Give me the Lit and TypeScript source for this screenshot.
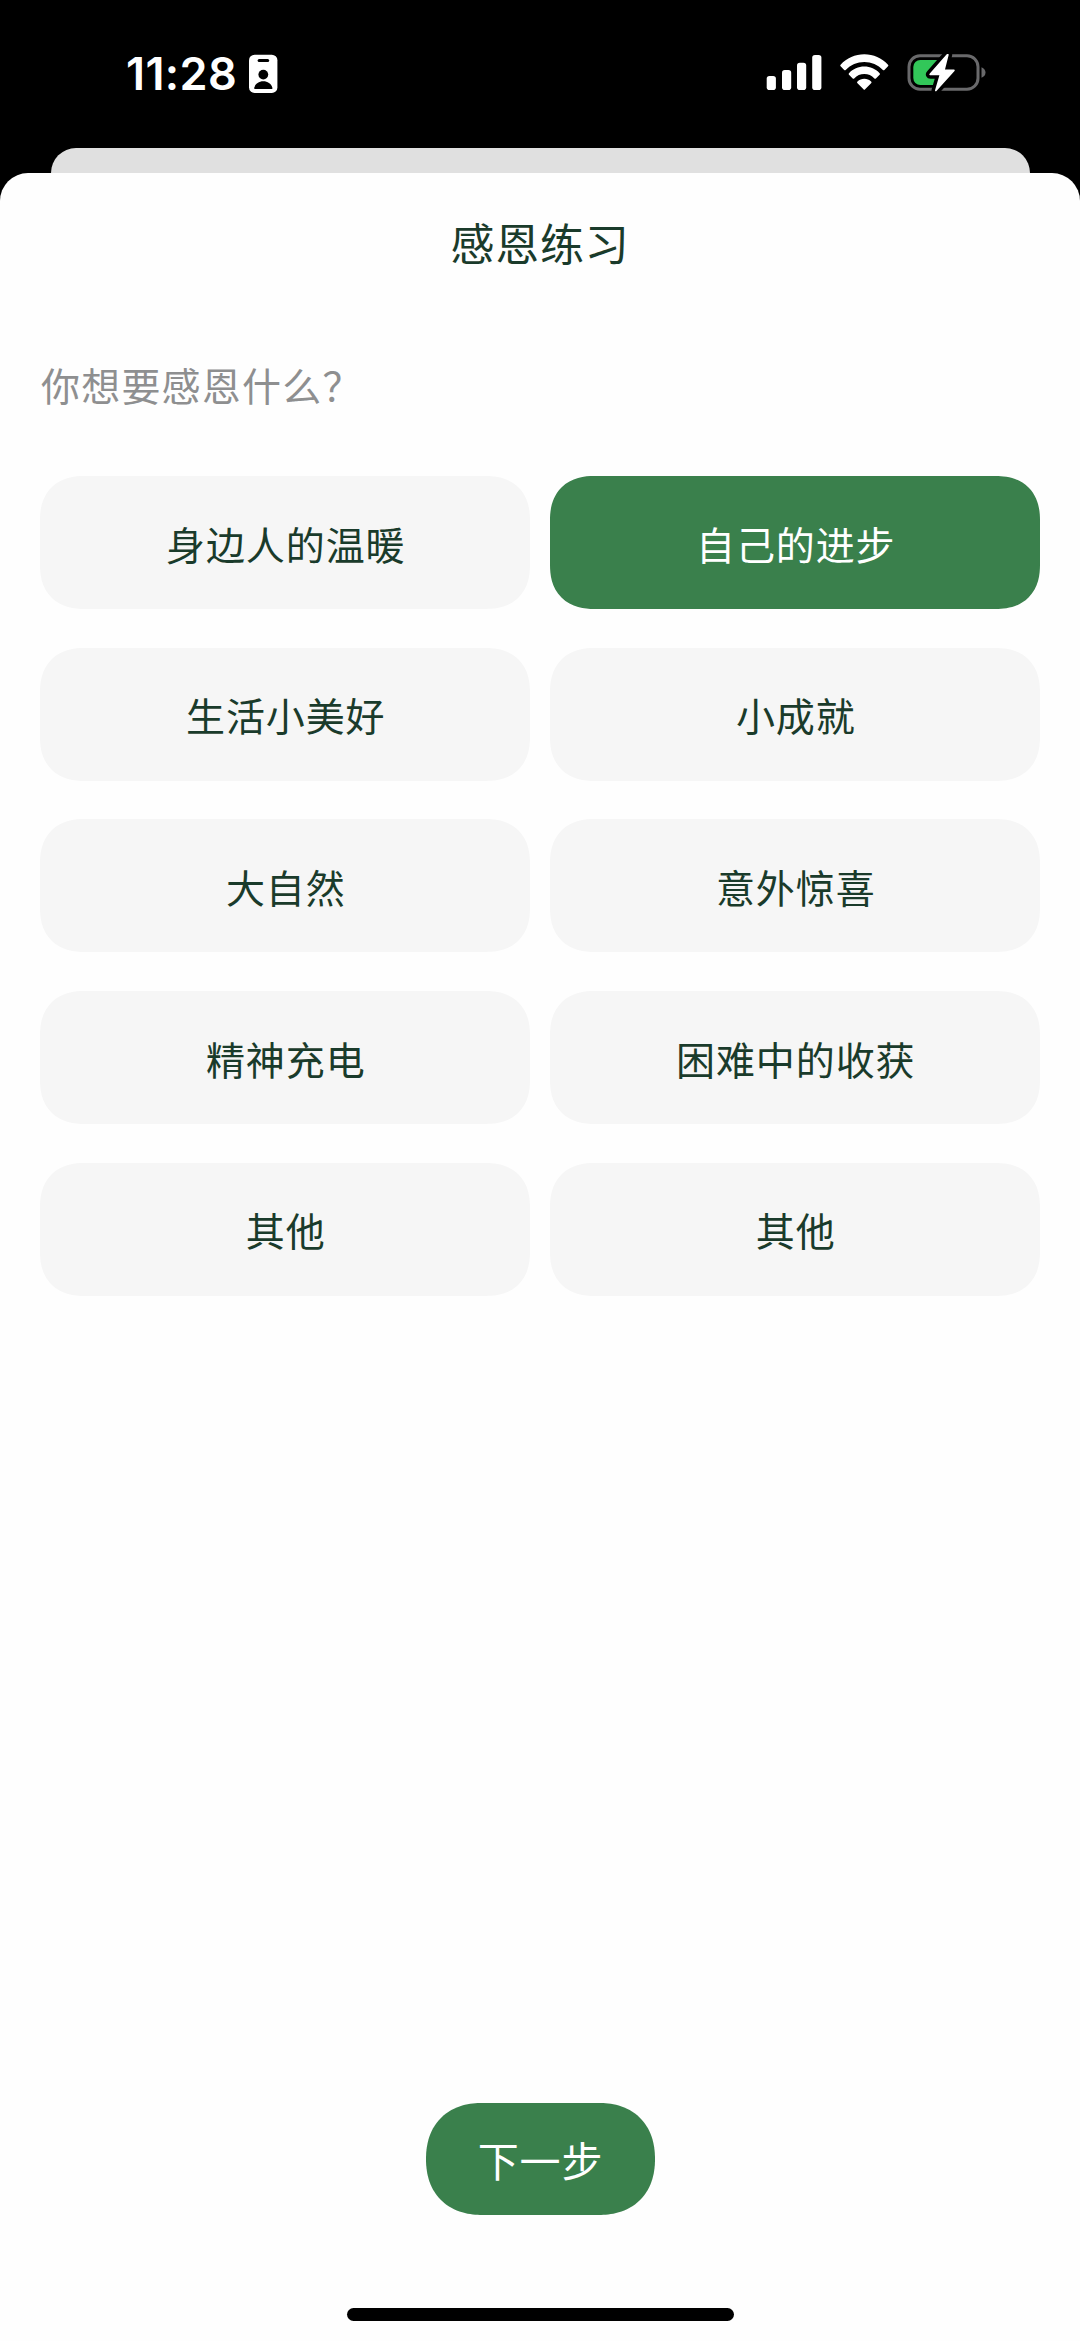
import { LitElement, html, css } from "lit";
import { customElement, property, state } from "lit/decorators.js";
import { classMap } from "lit/directives/class-map.js";

@customElement("status-bar")
class StatusBar extends LitElement {
  static styles = css`
    :host {
      display: flex;
      justify-content: space-between;
      align-items: flex-start;
      height: 148px;
      padding: 54px 94px 0 126px;
      box-sizing: border-box;
      color: #fff;
    }
    .left {
      display: flex;
      gap: 12px;
    }
    .time {
      font: 600 45px/40px Inter, sans-serif;
      letter-spacing: 0.4px;
      width: 111px;
      white-space: nowrap;
    }
    svg {
      display: block;
    }
  `;

  render() {
    return html`
      <div class="left">
        <div class="time">11:28</div>
        <svg width="29" height="40" viewBox="0 0 29 40">
          <rect x="0" y="0.7" width="28.4" height="38.3" rx="5.6" fill="#fff" />
          <rect x="8.6" y="5" width="11.6" height="3" rx="1.5" />
          <circle cx="14.3" cy="20.6" r="4.9" />
          <path d="M6 34.9c-.9 0-1-.6-.7-1.500C6.500 29.700 10 27.300 14.300 27.300s7.800 2.400 9 6.100c.3.900.2 1.500-.7 1.500z" />
        </svg>
      </div>
      <svg width="220" height="40" viewBox="0 0 220 40">
        <g fill="#fff">
          <rect x="0.7" y="22" width="9.2" height="14" rx="2.800" />
          <rect x="16" y="16" width="9.200" height="20" rx="2.800" />
          <rect x="31" y="8.800" width="9.200" height="27.200" rx="2.800" />
          <rect x="46.200" y="1" width="9.200" height="35" rx="2.800" />
          <path d="M74.600 12.200a1 1 0 0 1 0-1.500C80.800 4 89.200.3 98.300.3s17.500 3.700 23.700 10.400a1 1 0 0 1 0 1.500l-3.600 3.700a1 1 0 0 1-1.500 0C112 10.800 105.400 7.900 98.300 7.900s-13.700 2.900-18.600 8a1 1 0 0 1-1.500 0z" />
          <path d="M83 20.700a1 1 0 0 1 0-1.500c4-4.200 9.400-6.600 15.300-6.600s11.300 2.400 15.300 6.600a1 1 0 0 1 0 1.500l-3.700 3.700a1 1 0 0 1-1.500 0c-2.700-2.800-6.200-4.300-10.100-4.300s-7.400 1.500-10.100 4.300a1 1 0 0 1-1.500 0z" />
          <path d="M91.500 29.200a1 1 0 0 1 0-1.600c1.800-1.800 4.200-2.800 6.800-2.800s5 1 6.800 2.800a1 1 0 0 1 0 1.600l-6 6.100a1 1 0 0 1-1.600 0z" />
        </g>
        <rect x="143" y="1.800" width="69" height="33.400" rx="11" fill="none" stroke="#69696b" stroke-width="3" />
        <path d="M215.500 13.200c2.600 1 4 3 4 5.300s-1.400 4.300-4 5.300z" fill="#69696b" />
        <rect x="147.300" y="6" width="30" height="25" rx="7" fill="#32c759" />
        <path
          d="M181.200 .3 164.300 19.500c-.9 1-.4 1.800.7 1.800h8.900l-4.300 14.600c-.4 1.400.7 1.900 1.600.8L188.800 17.300c.9-1 .4-1.900-.7-1.900h-8.600l3.600-14.200c.3-1.400-.9-1.900-1.900-.9z"
          transform="translate(-.5 0)"
          fill="#fff"
          stroke="#000"
          stroke-width="7"
          paint-order="stroke"
        />
      </svg>
    `;
  }
}

@customElement("topic-option")
class TopicOption extends LitElement {
  @property() label = "";
  @property({ type: Boolean }) selected = false;

  static styles = css`
    :host {
      display: block;
    }
    .option {
      display: flex;
      align-items: center;
      justify-content: center;
      width: 100%;
      height: 133px;
      margin: 0;
      padding: 0 0 0 1.500px;
      box-sizing: border-box;
      border: 0;
      border-radius: 38px;
      background: #f6f6f6;
      color: #1a3b2b;
      font: 400 39px/56px "Noto Sans CJK SC", sans-serif;
      letter-spacing: 0.9px;
    }
    .selected {
      background: #3a804c;
      color: #fff;
    }
    @supports (corner-shape: superellipse(1.3)) {
      .option {
        border-radius: 44px;
        corner-shape: superellipse(1.2);
      }
    }
  `;

  render() {
    return html`<button class=${classMap({ option: true, selected: this.selected })}>${this.label}</button>`;
  }
}

@customElement("app-root")
class AppRoot extends LitElement {
  @state() private selectedIndex = 1;

  private topics = [
    "身边人的温暖",
    "自己的进步",
    "生活小美好",
    "小成就",
    "大自然",
    "意外惊喜",
    "精神充电",
    "困难中的收获",
    "其他",
    "其他",
  ];

  static styles = css`
    :host {
      display: flex;
      flex-direction: column;
      height: 2341px;
      background: #000;
      font-family: "Noto Sans CJK SC", sans-serif;
    }
    .behind {
      height: 25px;
      margin: 0 50.500px;
      border-radius: 25px 25px 0 0;
      background: #e0e0e0;
    }
    .sheet {
      flex: 1;
      display: flex;
      flex-direction: column;
      align-items: center;
      border-radius: 28px 28px 0 0;
      background: #fefefe;
    }
    .title {
      margin: 39px 0 0;
      font: 400 44px/60px "Noto Sans CJK SC", sans-serif;
      letter-spacing: 0.8px;
      color: #1a3b2b;
    }
    .question {
      align-self: stretch;
      margin: 82px 41px 0;
      font: 400 39px/60px "Noto Sans CJK SC", sans-serif;
      letter-spacing: 1.2px;
      color: #8e8f90;
    }
    .topics {
      align-self: stretch;
      display: grid;
      grid-template-columns: 1fr 1fr;
      gap: 38.700px 20px;
      margin: 62px 40px 0;
    }
    .next {
      width: 229px;
      height: 112px;
      margin: auto 0 93px;
      padding: 0 0 0 1px;
      border: 0;
      border-radius: 52px;
      background: #3a804c;
      color: #fff;
      font: 400 41px/56px "Noto Sans CJK SC", sans-serif;
      letter-spacing: 0.8px;
    }
    @supports (corner-shape: superellipse(1.2)) {
      .next {
        border-radius: 56px;
        corner-shape: superellipse(1.16);
      }
    }
    .home {
      width: 387px;
      height: 13px;
      margin-bottom: 20px;
      border-radius: 7px;
      background: #000;
    }
  `;

  render() {
    return html`
      <status-bar></status-bar>
      <div class="behind"></div>
      <main class="sheet">
        <h1 class="title">感恩练习</h1>
        <p class="question">你想要感恩什么？</p>
        <div class="topics">
          ${this.topics.map(
            (label, i) => html`<topic-option
              .label=${label}
              .selected=${i === this.selectedIndex}
              @click=${() => (this.selectedIndex = i)}
            ></topic-option>`,
          )}
        </div>
        <button class="next">下一步</button>
        <div class="home"></div>
      </main>
    `;
  }
}
